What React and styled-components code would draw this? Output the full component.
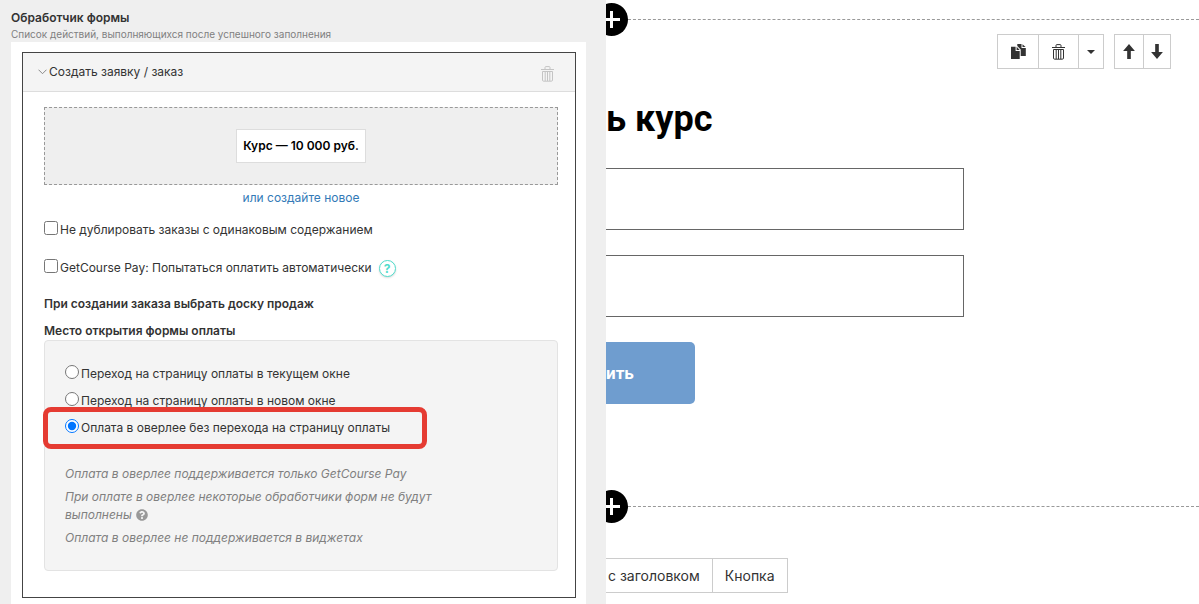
import React, { useState } from 'react'
import styled, { createGlobalStyle } from 'styled-components'
import { FaQuestionCircle } from 'react-icons/fa'

const GlobalStyle = createGlobalStyle`
  * {
    box-sizing: border-box;
  }

  body {
    margin: 0;
    background: #fff;
    color: #333;
    font-family: Inter, "Liberation Sans", sans-serif;
    font-size: 12px;
    line-height: 18px;
  }

  button,
  input {
    font-family: inherit;
  }
`

const Page = styled.div`
  display: flex;
  min-height: 100vh;
`

/* ---------- settings ---------- */

const Settings = styled.aside`
  flex: 0 0 606px;
  display: flex;
  flex-direction: column;
  padding: 9px 20px 0 11px;
  background: #efefef;
`

const SettingsTitle = styled.h2`
  margin: 0;
  font-size: 12px;
  line-height: 18px;
  font-weight: 600;
`

const SettingsHint = styled.p`
  margin: 0;
  color: #808080;
  font-size: 10px;
  line-height: 15px;
`

const Handlers = styled.div`
  flex: 1;
  padding: 10px 10px 6px 11px;
  background: #fff;
`

const Handler = styled.section`
  border: 1px solid #444;
`

const HandlerHeader = styled.header`
  display: flex;
  align-items: center;
  justify-content: space-between;
  height: 39px;
  padding: 0 21px 0 15px;
  border-bottom: 1px solid #ddd;
  background: #f4f4f4;
`

const PlainButton = styled.button`
  display: flex;
  align-items: center;
  gap: 2px;
  padding: 0;
  border: 0;
  background: none;
  color: #333;
  font-size: 12px;
  line-height: 18px;
  cursor: pointer;
`

const DeleteButton = styled(PlainButton)`
  padding-top: 4px;
  color: #c4c4c4;
`

const HandlerBody = styled.div`
  padding: 15px 17px 26px 21px;
`

const OfferZone = styled.div`
  display: flex;
  align-items: center;
  justify-content: center;
  height: 78px;
  border: 1px dashed #999;
  background: #efefef;
`

const Offer = styled.button`
  height: 34px;
  padding: 0 6px;
  border: 1px solid #ddd;
  background: #fff;
  color: #000;
  font-size: 12px;
  line-height: 18px;
  font-weight: 600;
`

const CreateLink = styled.a`
  display: block;
  margin-top: 4px;
  color: #337ab7;
  text-align: center;
  text-decoration: none;
`

const CheckRow = styled.div`
  display: flex;
  align-items: center;
  margin-top: ${props => props.$top}px;
`

const Option = styled.label`
  display: flex;
  align-items: center;
  gap: 2px;

  input {
    width: 14px;
    height: 14px;
    margin: 0 0 4px;
  }
`

const Help = styled.button`
  width: 17px;
  height: 17px;
  margin-left: 7px;
  padding: 0;
  border: 1px solid #4fdccb;
  border-radius: 50%;
  background: #fff;
  color: #4fdccb;
  font-size: 12px;
  line-height: 15px;
  font-weight: 700;
  box-shadow: 0 1px 2px rgba(0, 0, 0, 0.15);
`

const FieldTitle = styled.h3`
  margin: ${props => props.$top}px 0 0;
  font-size: 12px;
  line-height: 18px;
  font-weight: 600;
`

const PaymentPlace = styled.div`
  padding: 24px 20px 23px;
  border: 1px solid #e3e3e3;
  border-radius: 4px;
  background: #f4f4f4;
`

const Radios = styled.div`
  display: flex;
  flex-direction: column;
  gap: 9px;
`

const RadioRow = styled.div`
  position: relative;
`

const Highlight = styled.span`
  position: absolute;
  top: -12px;
  left: -22px;
  width: 384px;
  height: 42px;
  border: 5px solid #e53b32;
  border-radius: 8px;
  pointer-events: none;
`

const Notes = styled.div`
  display: flex;
  flex-direction: column;
  gap: 5px;
  max-width: 376px;
  margin-top: 28px;
  color: #808080;
  font-style: italic;

  p {
    margin: 0;
  }

  svg {
    margin-left: 1px;
    color: #999;
    vertical-align: -2px;
  }
`

/* ---------- page editor ---------- */

const Canvas = styled.main`
  flex: 1;
  min-width: 0;
  overflow: hidden;
`

const AddRow = styled.div`
  display: flex;
  align-items: center;
  padding-top: 3px;
`

const AddButton = styled.button`
  display: flex;
  align-items: center;
  justify-content: center;
  flex: none;
  width: 33px;
  height: 33px;
  margin-left: -11px;
  padding: 0;
  border: 0;
  border-radius: 50%;
  background: #000;
  color: #fff;
`

const Dashes = styled.div`
  flex: 1;
  border-top: 1px dashed #999;
`

const Block = styled.section`
  display: flex;
  flex-direction: column;
  height: 451px;
`

const Toolbar = styled.div`
  display: flex;
  justify-content: flex-end;
  gap: 10px;
  margin-top: -2px;
  padding-right: 28px;
`

const ToolGroup = styled.div`
  display: flex;
  border: 1px solid #ccc;
`

const Tool = styled.button`
  display: flex;
  align-items: center;
  justify-content: center;
  width: ${props => props.$width}px;
  height: 33px;
  padding: 0;
  border: 0;
  background: #fff;
  color: #333;

  & + & {
    border-left: 1px solid #ccc;
  }
`

const BlockTitle = styled.h1`
  margin: 28px 0 26px;
  color: #000;
  font-family: Roboto, sans-serif;
  font-size: 36px;
  line-height: 45px;
  font-weight: 700;
`

const Form = styled.form`
  display: flex;
  flex-direction: column;
  align-items: flex-start;
  gap: 25px;
  padding-right: 235px;
`

const TextField = styled.input`
  width: 100%;
  height: 62px;
  padding: 0 16px;
  border: 1px solid #666;
  border-left: 0;
  background: #fff;
  font-size: 16px;
`

const Submit = styled.button`
  width: 89px;
  height: 62px;
  padding: 0;
  border: 0;
  border-radius: 0 5px 5px 0;
  background: #6f9dcf;
  color: #fff;
  font-family: Roboto, sans-serif;
  font-size: 17px;
  font-weight: 700;
  text-align: left;
`

const BlockTypes = styled.div`
  display: flex;
  margin-top: 35px;
`

const BlockType = styled.button`
  height: 35px;
  padding: 0 12px 0 ${props => props.$left}px;
  border: 1px solid #ccc;
  border-left: 0;
  background: #fff;
  color: #333;
  font-size: 14px;
`

const Trash = () => (
  <svg width="13" height="16" viewBox="0 0 13 16" fill="none" stroke="currentColor">
    <path d="M0 3.5h13" />
    <path d="M4 3V1.5Q4 .6 5 .6h3Q9 .6 9 1.5V3" />
    <path d="M1.5 5.5h10V14q0 1.2-1.2 1.2H2.7Q1.5 15.2 1.5 14z" />
    <path d="M4.2 5.5v9.5M6.5 5.5v9.5M8.8 5.5v9.5" />
  </svg>
)

const Copy = () => (
  <svg width="15" height="15" viewBox="0 0 15 15" fill="currentColor">
    <path d="M0 2.7h4.6v4.2h4.1V15H0z" />
    <path d="M5.6 2.7l3.1 3.2H5.6z" />
    <path d="M6.3 0h4.2v4.1h4.3V12H9.7V5.5L6.3 2.1z" />
    <path d="M11.5.2l3.1 2.9h-3.1z" />
  </svg>
)

const Arrow = ({ down }) => (
  <svg width="12" height="15" viewBox="0 0 11 14" fill="currentColor">
    <path d={down ? 'M5.5 14L11 7.5H7.2V0H3.8v7.5H0z' : 'M5.5 0L11 6.5H7.2V14H3.8V6.5H0z'} />
  </svg>
)

const Caret = () => (
  <svg width="8" height="4" viewBox="0 0 8 4" fill="currentColor">
    <path d="M0 0h8L4 4z" />
  </svg>
)

const Chevron = () => (
  <svg width="9" height="6" viewBox="0 0 9 6" fill="none" stroke="#888">
    <path d="M.5.7l4 4 4-4" />
  </svg>
)

const Plus = () => (
  <svg width="17" height="17" viewBox="0 0 17 17" stroke="currentColor" strokeWidth="3">
    <path d="M8.5 0v17M0 8.5h17" />
  </svg>
)

const places = [
  { value: 'current', label: 'Переход на страницу оплаты в текущем окне' },
  { value: 'new', label: 'Переход на страницу оплаты в новом окне' },
  { value: 'overlay', label: 'Оплата в оверлее без перехода на страницу оплаты' },
]

const AddBlock = () => (
  <AddRow>
    <AddButton type="button" aria-label="Добавить блок"><Plus /></AddButton>
    <Dashes />
  </AddRow>
)

const FormHandler = () => {
  const [place, setPlace] = useState('overlay')

  return (
    <Handler>
      <HandlerHeader>
        <PlainButton type="button"><Chevron />Создать заявку / заказ</PlainButton>
        <DeleteButton type="button" aria-label="Удалить"><Trash /></DeleteButton>
      </HandlerHeader>

      <HandlerBody>
        <OfferZone>
          <Offer type="button">Курс — 10 000 руб.</Offer>
        </OfferZone>
        <CreateLink href="#new">или создайте новое</CreateLink>

        <CheckRow $top={14}>
          <Option>
            <input type="checkbox" />
            Не дублировать заказы с одинаковым содержанием
          </Option>
        </CheckRow>
        <CheckRow $top={20}>
          <Option>
            <input type="checkbox" />
            GetCourse Pay: Попытаться оплатить автоматически
          </Option>
          <Help type="button">?</Help>
        </CheckRow>

        <FieldTitle $top={18}>При создании заказа выбрать доску продаж</FieldTitle>
        <FieldTitle $top={9}>Место открытия формы оплаты</FieldTitle>

        <PaymentPlace>
          <Radios>
            {places.map(({ value, label }) => (
              <RadioRow key={value}>
                <Option>
                  <input
                    type="radio"
                    name="place"
                    value={value}
                    checked={place === value}
                    onChange={() => setPlace(value)}
                  />
                  {label}
                </Option>
                {value === 'overlay' && <Highlight />}
              </RadioRow>
            ))}
          </Radios>

          <Notes>
            <p>Оплата в оверлее поддерживается только GetCourse Pay</p>
            <p>
              При оплате в оверлее некоторые обработчики форм не будут выполнены{' '}
              <FaQuestionCircle size={12} />
            </p>
            <p>Оплата в оверлее не поддерживается в виджетах</p>
          </Notes>
        </PaymentPlace>
      </HandlerBody>
    </Handler>
  )
}

const App = () => (
  <>
    <GlobalStyle />
    <Page>
      <Settings>
        <SettingsTitle>Обработчик формы</SettingsTitle>
        <SettingsHint>Список действий, выполняющихся после успешного заполнения</SettingsHint>
        <Handlers>
          <FormHandler />
        </Handlers>
      </Settings>

      <Canvas>
        <AddBlock />
        <Block>
          <Toolbar>
            <ToolGroup>
              <Tool type="button" $width={40} aria-label="Копировать"><Copy /></Tool>
              <Tool type="button" $width={40} aria-label="Удалить"><Trash /></Tool>
              <Tool type="button" $width={25} aria-label="Ещё"><Caret /></Tool>
            </ToolGroup>
            <ToolGroup>
              <Tool type="button" $width={28} aria-label="Вверх"><Arrow /></Tool>
              <Tool type="button" $width={27} aria-label="Вниз"><Arrow down /></Tool>
            </ToolGroup>
          </Toolbar>
          <BlockTitle>ь курс</BlockTitle>
          <Form>
            <TextField type="text" aria-label="Имя" />
            <TextField type="text" aria-label="Телефон" />
            <Submit type="button">ить</Submit>
          </Form>
        </Block>
        <AddBlock />
        <BlockTypes>
          <BlockType type="button" $left={2}>с заголовком</BlockType>
          <BlockType type="button" $left={12}>Кнопка</BlockType>
        </BlockTypes>
      </Canvas>
    </Page>
  </>
)

export default App
